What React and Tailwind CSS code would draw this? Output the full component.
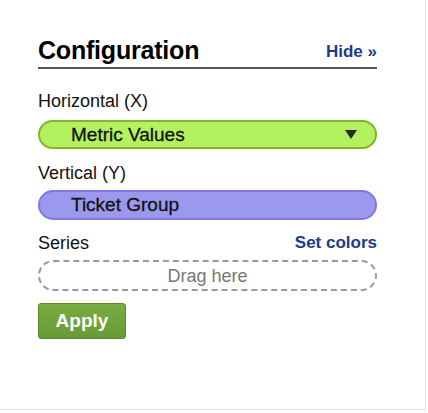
export default function App() {
  return (
    <div className="h-[413px] w-[428px] bg-white" style={{ fontFamily: '"Liberation Sans", Arial, sans-serif' }}>
      <div className="h-[410px] w-[426px] border-r border-b border-[#e2e2e2] pl-[38px] pr-[48px] pt-[37px]">
        <div className="flex items-end justify-between border-b-2 border-[#555] pb-[3px]">
          <h2 className="text-[25px] font-bold leading-[27px] tracking-[-0.2px] text-black">Configuration</h2>
          <a className="pb-[2px] text-[17px] font-bold leading-[20px] text-[#1b3b8e]">Hide »</a>
        </div>

        <div className="mt-[21px] text-[18px] leading-[22px] text-[#111]">Horizontal (X)</div>
        <div className="mt-[8px] flex h-[29px] items-center justify-between rounded-full border-2 border-[#84b530] bg-[#b4f15f] pl-[31px] pr-[18px]">
          <span className="text-[19px] leading-[22px] text-[#111] [-webkit-text-stroke:0.3px_#111]">Metric Values</span>
          <svg width="12" height="9" viewBox="0 0 12 9">
            <path d="M0 0H12L6 9Z" fill="#2a2a2a" />
          </svg>
        </div>

        <div className="mt-[13px] text-[18px] leading-[22px] text-[#111]">Vertical (Y)</div>
        <div className="mt-[6px] flex h-[30px] items-center rounded-full border-2 border-[#7d79e4] bg-[#9b98ee] pl-[31px]">
          <span className="text-[19px] leading-[22px] text-[#111] [-webkit-text-stroke:0.3px_#111]">Ticket Group</span>
        </div>

        <div className="mt-[12px] flex items-center justify-between">
          <span className="text-[18px] leading-[22px] text-[#111]">Series</span>
          <a className="text-[17px] font-bold leading-[22px] text-[#1b3b8e]">Set colors</a>
        </div>
        <div className="mt-[6px] flex h-[31px] items-center justify-center rounded-full border-2 border-dashed border-[#9a9a9a]">
          <span className="text-[18px] leading-[22px] text-[#777]">Drag here</span>
        </div>

        <button className="mt-[12px] flex h-[36px] w-[88px] items-center justify-center rounded-[3px] border border-[#5a8a2c] bg-gradient-to-b from-[#79ad42] to-[#679a35] text-[19px] font-bold text-white">
          Apply
        </button>
      </div>
    </div>
  )
}
